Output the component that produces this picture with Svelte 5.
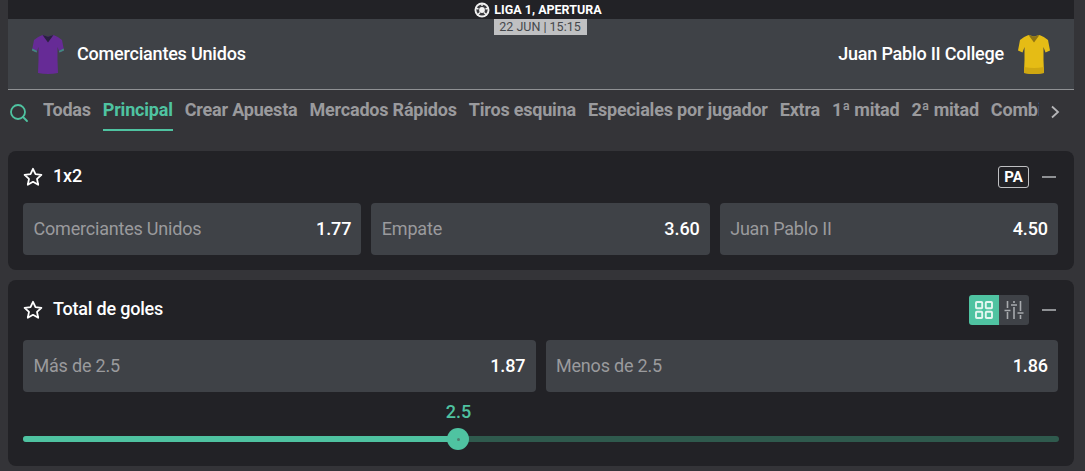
<script>
  const tabs = ['Todas', 'Principal', 'Crear Apuesta', 'Mercados Rápidos', 'Tiros esquina', 'Especiales por jugador', 'Extra', '1ª mitad', '2ª mitad', 'Combinadas'];
  const main = [
    { name: 'Comerciantes Unidos', odd: '1.77' },
    { name: 'Empate', odd: '3.60' },
    { name: 'Juan Pablo II', odd: '4.50' }
  ];
  const goals = [
    { name: 'Más de 2.5', odd: '1.87' },
    { name: 'Menos de 2.5', odd: '1.86' }
  ];
  const shirt = 'M10.500 1 L14 2 Q16 3 18 2 L21.500 1 Q27 3 30 6 L32 16.500 L27.500 18.500 L25.500 13 L25.500 26 L26 39 Q16 41 6 39 L6.500 26 L6.500 13 L4.500 18.500 L0 16.500 L2 6 Q5 3 10.500 1 Z';
</script>

{#snippet star()}
  <svg class="star" viewBox="0 0 20 20" width="20" height="20"><path d="M10 1.800 L12.500 7.200 L18.400 7.900 L14 11.900 L15.200 17.800 L10 14.800 L4.800 17.800 L6 11.900 L1.600 7.900 L7.500 7.200 Z" fill="none" stroke="#fff" stroke-width="1.800" stroke-linejoin="round"/></svg>
{/snippet}

{#snippet odds(items)}
  <div class="odds">
    {#each items as o}
      <div class="odd"><span class="oname">{o.name}</span><span class="oval">{o.odd}</span></div>
    {/each}
  </div>
{/snippet}

<div class="page">
  <div class="league">
    <svg viewBox="0 0 16 16" width="16" height="16"><circle cx="8" cy="8" r="7.500" fill="#f2f2f2"/><circle cx="8" cy="8" r="5.600" fill="#3a3a3e"/><circle cx="8" cy="8" r="2.900" fill="#f2f2f2"/><path d="M8 1 V4 M1.500 6 L4.500 7 M14.500 6 L11.500 7 M3.500 13 L6 10.500 M12.500 13 L10 10.500" stroke="#f2f2f2" stroke-width="1.400"/></svg>
    <span>LIGA 1, APERTURA</span>
  </div>
  <header class="match">
    <div class="time">22 JUN | 15:15</div>
    <div class="team">
      <svg class="shirt" viewBox="0 0 32 41" width="32" height="41"><path d={shirt} fill="#662b96"/><path d="M10.500 1 L16 8.500 L21.500 1 L18 2 Q16 3 14 2 Z" fill="#2a2140"/><path d="M0 16.500 L4.500 18.500 L5 17 L.4 14.500 Z M32 16.500 L27.500 18.500 L27 17 L31.600 14.500 Z" fill="#3f8c7c"/></svg>
      <span>Comerciantes Unidos</span>
    </div>
    <div class="team away">
      <span>Juan Pablo II College</span>
      <svg class="shirt" viewBox="0 0 32 41" width="32" height="41"><path d={shirt} fill="#e5bc15"/><path d="M10.500 1 L16 8.500 L21.500 1 L18 2 Q16 3 14 2 Z" fill="#8f7414"/><path d="M6 39 Q16 41 26 39 L25.800 33 Q16 35 6.200 33 Z" fill="#cfa711"/></svg>
    </div>
  </header>
  <nav class="tabs">
    <svg class="search" viewBox="0 0 20 20" width="20" height="20"><circle cx="9" cy="9" r="7" fill="none" stroke="#4fc3a1" stroke-width="1.800"/><path d="M14 14 L18 18" stroke="#4fc3a1" stroke-width="1.800" stroke-linecap="round"/></svg>
    <div class="tablist">
      {#each tabs as t}
        <span class="tab" class:active={t === 'Principal'}>{t}</span>
      {/each}
    </div>
    <svg class="chev" viewBox="0 0 10 14" width="10" height="14"><path d="M2 1.500 L8 7 L2 12.500" fill="none" stroke="#b5b5b8" stroke-width="1.800"/></svg>
  </nav>

  <section class="card first">
    <div class="chead">
      {@render star()}
      <h2>1x2</h2>
      <div class="tools"><span class="pa">PA</span><span class="dash"></span></div>
    </div>
    {@render odds(main)}
  </section>

  <section class="card">
    <div class="chead">
      {@render star()}
      <h2>Total de goles</h2>
      <div class="tools">
        <div class="toggle">
          <span class="tbtn on">
            <svg viewBox="0 0 18 18" width="18" height="18"><g fill="none" stroke="#e4f6f0" stroke-width="1.900"><rect x="1" y="1" width="6.200" height="6.200" rx=".8"/><rect x="10.800" y="1" width="6.200" height="6.200" rx=".8"/><rect x="1" y="10.800" width="6.200" height="6.200" rx=".8"/><rect x="10.800" y="10.800" width="6.200" height="6.200" rx=".8"/></g></svg>
          </span>
          <span class="tbtn">
            <svg viewBox="0 0 20 18" width="20" height="18"><g stroke="#a8abae" stroke-width="1.600" fill="none"><path d="M3.500 0 V7 M10 0 V2 M16.500 0 V10 M3.500 11 V18 M10 6 V18 M16.500 14 V18 M.5 9.500 H6.500 M7 4 H13 M13.500 12 H19.500"/></g></svg>
          </span>
        </div>
        <span class="dash"></span>
      </div>
    </div>
    {@render odds(goals)}
    <div class="slider">
      <div class="val">2.5</div>
      <div class="track"><div class="fill"></div><div class="thumb"><i></i></div></div>
    </div>
  </section>
</div>

<style>
  :global(body) { margin: 0; background: #343438; }
  .page { width: 1066px; margin-left: 8px; height: 471px; overflow: hidden; font-family: Roboto, "Liberation Sans", sans-serif; letter-spacing: -0.2px; }
  .league { height: 19px; background: #222226; color: #fff; display: flex; align-items: center; justify-content: center; gap: 4px; font-size: 12.500px; font-weight: 700; letter-spacing: 0; padding-right: 6px; box-sizing: border-box; }
  .match { position: relative; height: 70px; background: #3f4247; border-bottom: 1px solid #8f9194; display: flex; align-items: center; justify-content: space-between; padding: 0 24px; color: #fff; font-size: 18px; font-weight: 500; }
  .team span { padding-bottom: 2px; }
  .time { position: absolute; top: 0; left: 486px; width: 92px; height: 16px; line-height: 16px; padding-right: 1px; background: #bfc0c2; color: #45484c; font-size: 12.500px; text-align: center; font-weight: 400; letter-spacing: 0; }
  .team { display: flex; align-items: center; gap: 13px; }
  .team.away { gap: 14px; }
  .shirt { display: block; }
  .tabs { height: 41px; display: flex; align-items: flex-start; }
  .search { margin: 13px 0 0 1px; flex: none; }
  .tablist { display: flex; gap: 12px; margin-left: 14px; width: 996px; overflow: hidden; white-space: nowrap; flex: none; }
  .tab { color: #9a9a9d; font-size: 18px; font-weight: 700; height: 41px; line-height: 40px; box-sizing: border-box; flex: none; }
  .tab.active { color: #4fc3a1; border-bottom: 2px solid #4fc3a1; }
  .chev { margin: 15px 0 0 11px; flex: none; }
  .card { background: #222226; border-radius: 8px; padding: 0 16px 0 15px; margin-bottom: 10px; }
  .card.first { margin-top: 20px; height: 119px; }
  .card:not(.first) { height: 186px; }
  .chead { height: 52px; display: flex; align-items: center; gap: 10px; }
  .star { flex: none; }
  h2 { margin: 0 0 4px; color: #fff; font-size: 18px; font-weight: 500; }
  .tools { margin-left: auto; display: flex; align-items: center; }
  .pa { border: 1px solid #bfc0c2; border-radius: 3px; color: #fff; font-size: 15px; font-weight: 700; width: 29px; height: 20px; line-height: 20px; text-align: center; letter-spacing: 0; }
  .dash { width: 14px; height: 2px; background: #8f9194; margin: 0 2px 0 13px; }
  .toggle { display: flex; border-radius: 3px; overflow: hidden; }
  .tbtn { width: 30px; height: 30px; background: #3f4247; display: flex; align-items: center; justify-content: center; }
  .tbtn.on { background: #4fc3a1; }
  .odds { display: flex; gap: 10px; }
  .odd { flex: 1; height: 52px; background: #3f4247; border-radius: 4px; display: flex; align-items: center; justify-content: space-between; padding: 0 10px 2px 10.500px; box-sizing: border-box; font-size: 18px; }
  .oname { color: #9a9a9d; }
  .oval { color: #fff; font-weight: 500; letter-spacing: -0.1px; }
  .card:not(.first) .chead { height: 60px; }
  .slider { margin-top: 9px; }
  .val { color: #4fc3a1; font-size: 18px; font-weight: 500; letter-spacing: 0; text-align: center; width: 871px; height: 21px; line-height: 21px; }
  .track { position: relative; height: 6px; background: #2f5a4d; border-radius: 3px; margin: 14px 0 0 0; width: 1036px; }
  .fill { width: 435px; height: 6px; background: #4fc3a1; border-radius: 3px; }
  .thumb { position: absolute; left: 424px; top: -8px; width: 22px; height: 22px; border-radius: 50%; background: #4fc3a1; display: flex; align-items: center; justify-content: center; }
  .thumb i { width: 3px; height: 3px; border-radius: 50%; background: #4d7f70; }
</style>
